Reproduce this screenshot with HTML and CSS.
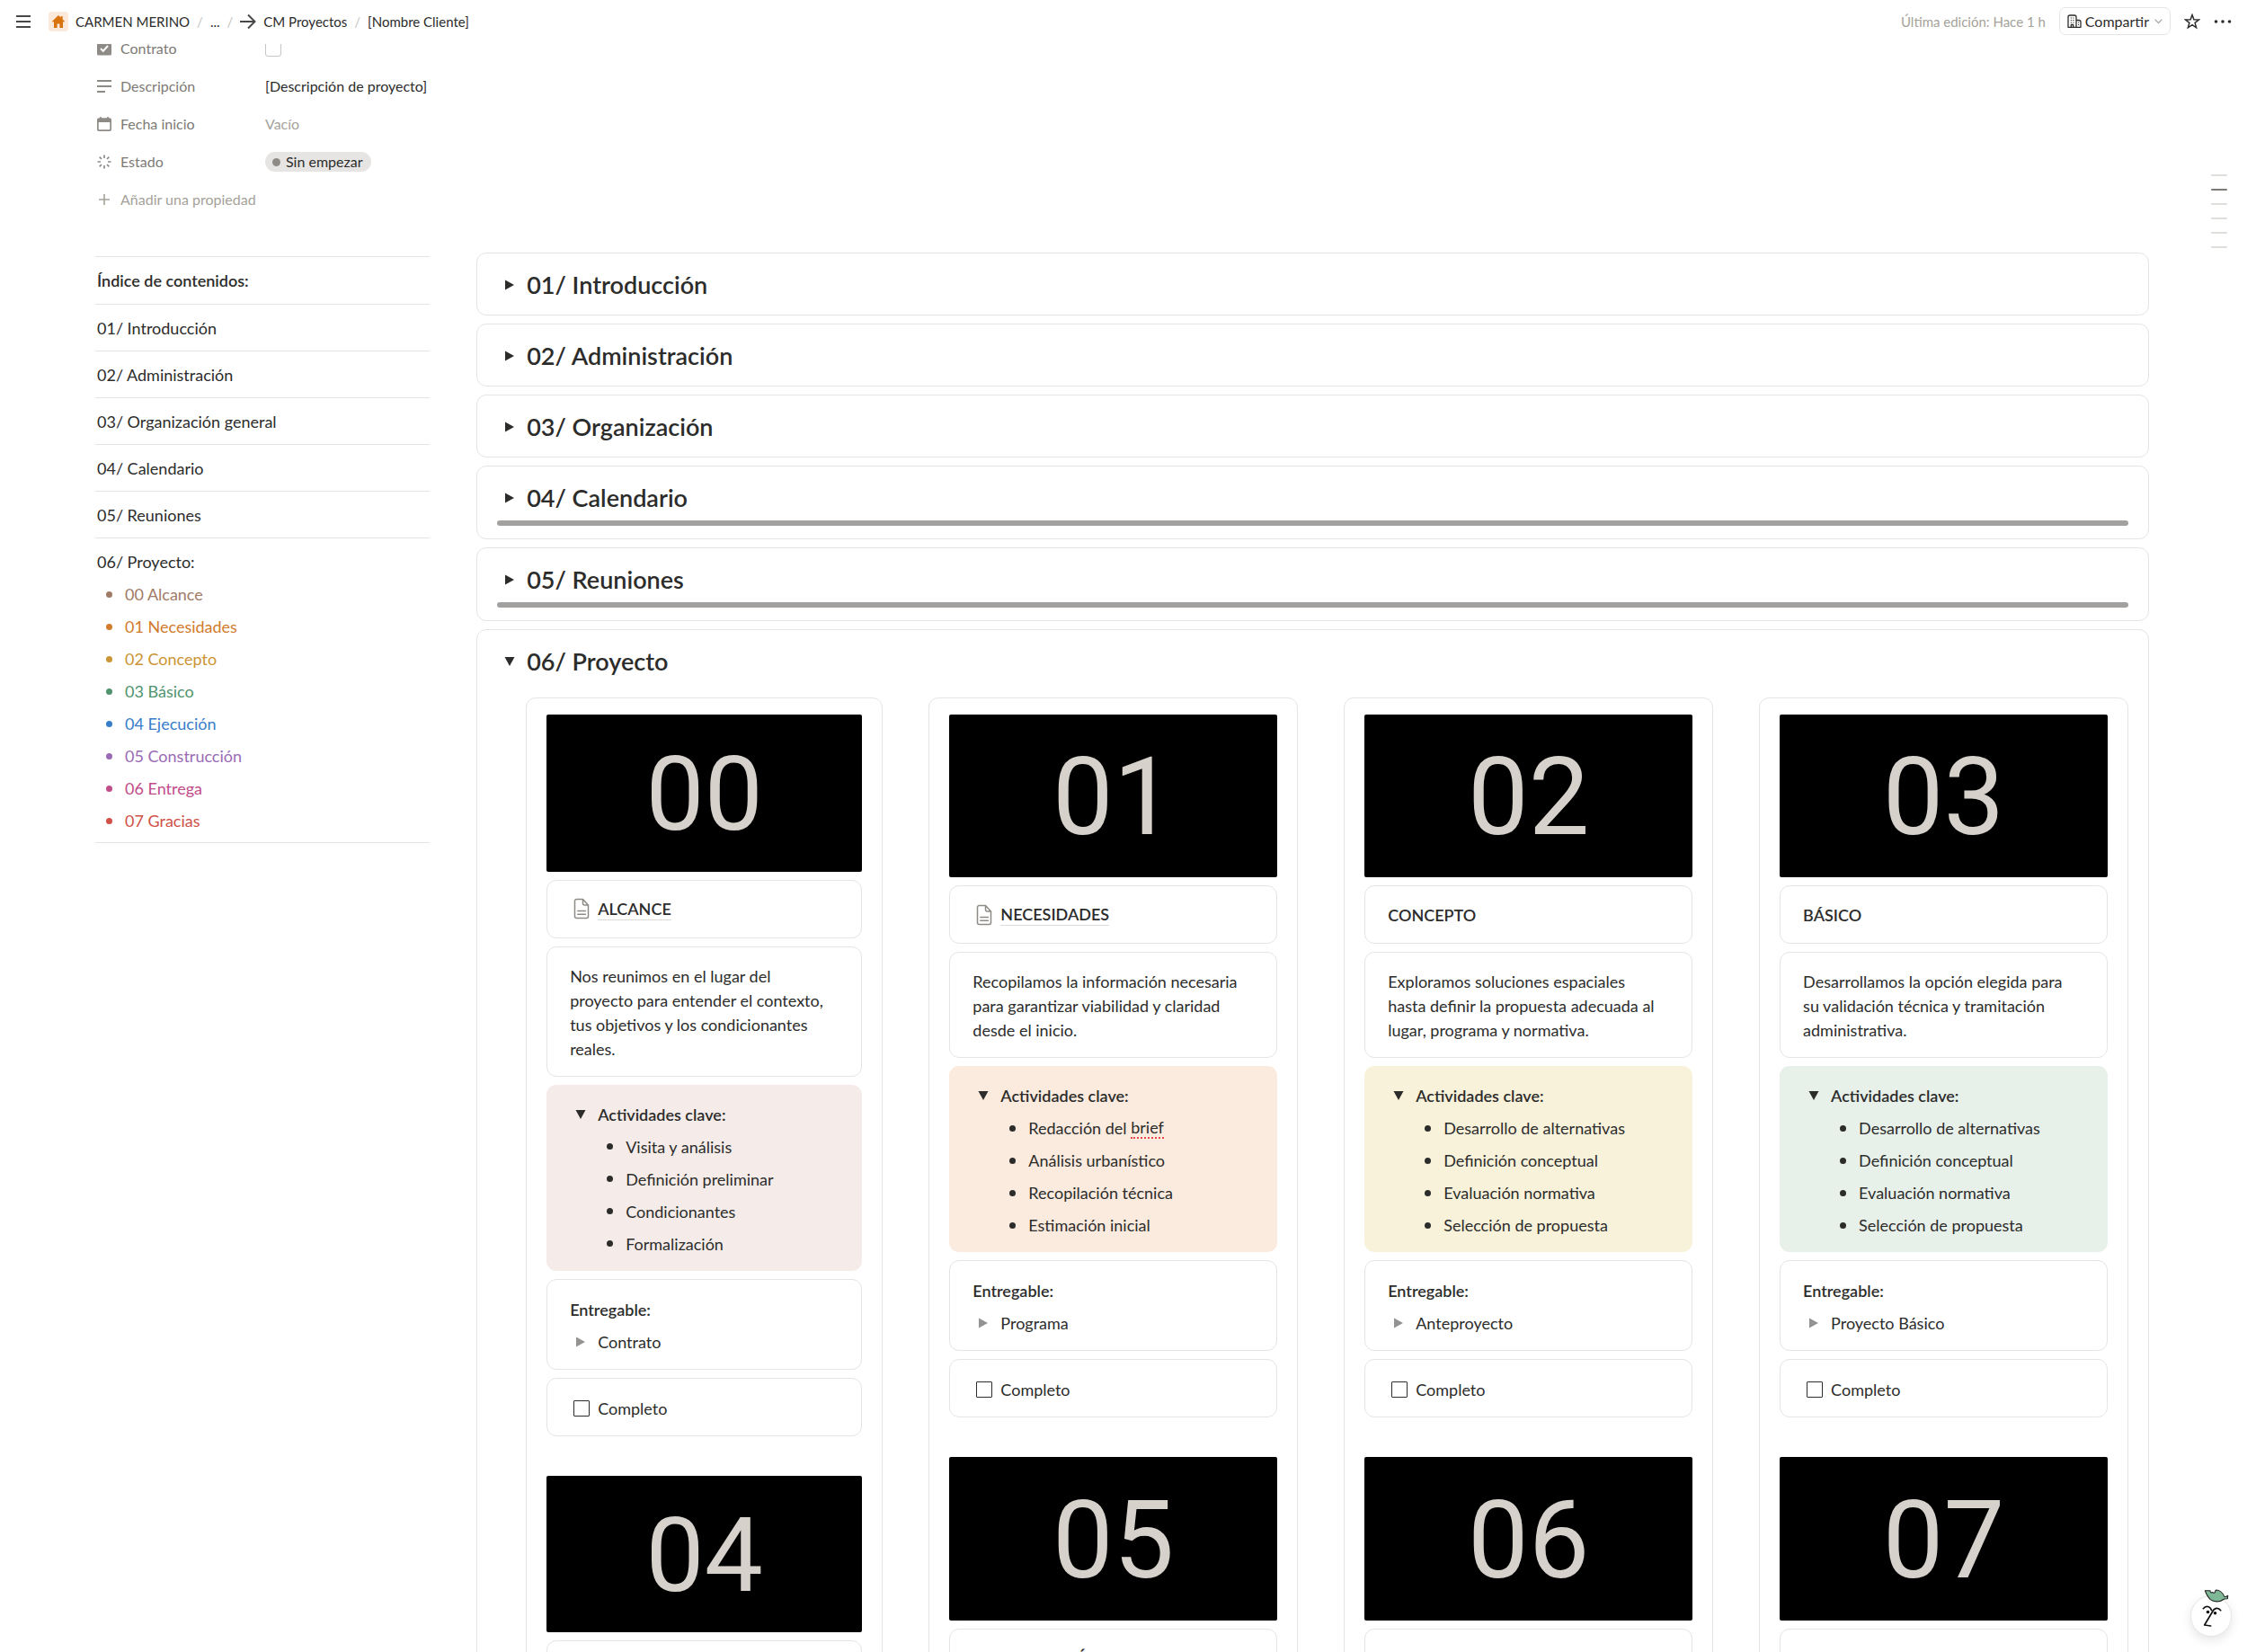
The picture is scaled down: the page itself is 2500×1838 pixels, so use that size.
FILE: index.html
```html
<!DOCTYPE html>
<html lang="es">
<head>
<meta charset="utf-8">
<meta name="viewport" content="width=device-width, initial-scale=1">
<title>[Nombre Cliente]</title>
<link rel="stylesheet" href="styles.css">
</head>
<body>
<svg class="sprite" aria-hidden="true">
  <symbol id="tri-right" viewBox="0 0 12 12"><path d="M1 .6v10.800L11 6z"/></symbol>
  <symbol id="tri-down" viewBox="0 0 12 12"><path d="M.500 1h11L6 11z"/></symbol>
  <symbol id="doc" viewBox="0 0 18 24"><path d="M3.500 1.500h7L16.500 8v12.500a2 2 0 0 1-2 2h-11a2 2 0 0 1-2-2v-17a2 2 0 0 1 2-2zM10.500 1.500V6a2 2 0 0 0 2 2h4M4.800 14.500h8.600M4.800 18.300h8.600" fill="none" stroke="#8e8b86" stroke-width="1.500" stroke-linecap="round" stroke-linejoin="round"/></symbol>
</svg>
<div class="app">
  <header class="topbar">
    <button class="icon-btn" aria-label="Menú"><svg width="18" height="16" viewBox="0 0 18 16"><path d="M1 2h16M1 8h16M1 14h16" stroke="#494846" stroke-width="2"/></svg></button>
    <nav class="crumbs" aria-label="Ruta">
      <a href="#" class="crumb"><span class="home"><svg width="14" height="14" viewBox="0 0 14 14"><path d="M7 0 0 6.800l.9.900L2 6.700V14h3.600V9.500h2.800V14H12V6.700l1.100 1 .9-.900-2.400-2.300V1H9.700v1.600z" fill="#d9730d"/></svg></span>CARMEN MERINO</a>
      <span class="slash">/</span>
      <a href="#" class="crumb">...</a>
      <span class="slash">/</span>
      <a href="#" class="crumb"><svg width="18" height="18" viewBox="0 0 18 18"><path d="M0 9h16.500M9 1.500l7.500 7.500L9 16.500" fill="none" stroke="#494846" stroke-width="2"/></svg>CM Proyectos</a>
      <span class="slash">/</span>
      <a href="#" class="crumb">[Nombre Cliente]</a>
    </nav>
    <div class="actions">
      <span class="edited">Última edición: Hace 1 h</span>
      <button class="share"><svg width="16" height="16" viewBox="0 0 16 16"><path d="M1 14.300V3a2 2 0 0 1 2-2h5a2 2 0 0 1 2 2v11.300zM10 6.500h3a2 2 0 0 1 2 2v5.800h-5M4.300 14v-2.500h2.400V14" fill="none" stroke="#2c2c2b" stroke-width="1.300" stroke-linejoin="round"/><path d="M3.800 4h1.200M6.300 4h1.200M3.800 6.500h1.200M6.300 6.500h1.200M3.800 9h1.200M6.300 9h1.200M12 9h1M12 11.500h1" stroke="#2c2c2b" stroke-width="1.200"/></svg>Compartir<svg class="chev" width="9" height="6" viewBox="0 0 9 6"><path d="M.7.7 4.500 4.700 8.300.7" fill="none" stroke="#a5a29a" stroke-width="1.200"/></svg></button>
      <button class="icon-btn" aria-label="Favorito"><svg width="18" height="18" viewBox="0 0 18 18"><path d="M9 1.600l1.900 5.200 5.600.2-4.400 3.400 1.500 5.400L9 12.700l-4.600 3.100 1.500-5.400L1.500 7l5.600-.2z" fill="none" stroke="#2c2c2b" stroke-width="1.500"/></svg></button>
      <button class="icon-btn" aria-label="Más"><svg width="20" height="4" viewBox="0 0 20 4"><g fill="#2c2c2b"><circle cx="2.500" cy="2" r="1.800"/><circle cx="10" cy="2" r="1.800"/><circle cx="17.500" cy="2" r="1.800"/></g></svg></button>
    </div>
  </header>

  <main class="page">
    <div class="props">
      <div class="prop">
        <label class="prop-name" for="contrato"><svg width="16" height="16" viewBox="0 0 16 16"><rect width="16" height="15" y=".5" rx="1.500" fill="#8e8b86"/><path d="M4 8l2.800 2.800L12 5" fill="none" stroke="#fff" stroke-width="2"/></svg>Contrato</label>
        <input class="prop-check" id="contrato" type="checkbox">
      </div>
      <div class="prop">
        <span class="prop-name"><svg width="16" height="16" viewBox="0 0 16 16"><path d="M0 2h16M0 8h16M0 14h9" stroke="#8e8b86" stroke-width="2"/></svg>Descripción</span>
        <span>[Descripción de proyecto]</span>
      </div>
      <div class="prop">
        <span class="prop-name"><svg width="16" height="16" viewBox="0 0 16 16"><path d="M2 1.200h1.200V0h1.600v1.200h6.400V0h1.600v1.200H14a2 2 0 0 1 2 2V14a2 2 0 0 1-2 2H2a2 2 0 0 1-2-2V3.200a2 2 0 0 1 2-2zM1.700 6v7.500c0 .5.300.8.800.8h11c.5 0 .8-.3.800-.8V6z" fill="#8e8b86" fill-rule="evenodd"/></svg>Fecha inicio</span>
        <span class="empty">Vacío</span>
      </div>
      <div class="prop">
        <span class="prop-name"><svg width="16" height="16" viewBox="0 0 16 16"><path d="M8 .5v3.500M8 12v3.500M.5 8H4M12 8h3.500M2.700 2.700l2.300 2.300M11 11l2.300 2.300M2.700 13.300 5 11M11 5l2.300-2.300" stroke="#8e8b86" stroke-width="1.700"/></svg>Estado</span>
        <span class="pill">Sin empezar</span>
      </div>
      <button class="prop-add"><svg width="16" height="16" viewBox="0 0 16 16"><path d="M8 2v12M2 8h12" stroke="#a5a29a" stroke-width="1.600"/></svg>Añadir una propiedad</button>
    </div>

    <div class="layout">
      <nav class="toc" aria-label="Índice">
        <h2 class="toc-title">Índice de contenidos:</h2>
        <a class="toc-item" href="#s1">01/ Introducción</a>
        <a class="toc-item" href="#s2">02/ Administración</a>
        <a class="toc-item" href="#s3">03/ Organización general</a>
        <a class="toc-item" href="#s4">04/ Calendario</a>
        <a class="toc-item" href="#s5">05/ Reuniones</a>
        <div class="toc-group">
          <a href="#s6">06/ Proyecto:</a>
          <ul class="bullets">
            <li class="t-brown"><a href="#f0">00 Alcance</a></li>
            <li class="t-orange"><a href="#f1">01 Necesidades</a></li>
            <li class="t-yellow"><a href="#f2">02 Concepto</a></li>
            <li class="t-green"><a href="#f3">03 Básico</a></li>
            <li class="t-blue"><a href="#f4">04 Ejecución</a></li>
            <li class="t-purple"><a href="#f5">05 Construcción</a></li>
            <li class="t-pink"><a href="#f6">06 Entrega</a></li>
            <li class="t-red"><a href="#f7">07 Gracias</a></li>
          </ul>
        </div>
      </nav>

      <div class="sections">
        <section class="box section" id="s1"><details><summary class="heading"><svg><use href="#tri-right"/></svg>01/ Introducción</summary></details></section>
        <section class="box section" id="s2"><details><summary class="heading"><svg><use href="#tri-right"/></svg>02/ Administración</summary></details></section>
        <section class="box section" id="s3"><details><summary class="heading"><svg><use href="#tri-right"/></svg>03/ Organización</summary></details></section>
        <section class="box section" id="s4"><details><summary class="heading"><svg><use href="#tri-right"/></svg>04/ Calendario</summary></details><div class="bar"></div></section>
        <section class="box section" id="s5"><details><summary class="heading"><svg><use href="#tri-right"/></svg>05/ Reuniones</summary></details><div class="bar"></div></section>
        <section class="box section" id="s6">
          <details open>
            <summary class="heading"><svg><use href="#tri-down"/></svg>06/ Proyecto</summary>
            <div class="phases">

              <div class="box column">
                <article class="phase" id="f0">
                  <div class="cover"><span>00</span></div>
                  <div class="box card title"><svg class="doc"><use href="#doc"/></svg><a class="page-link" href="#">ALCANCE</a></div>
                  <p class="box card text">Nos reunimos en el lugar del proyecto para entender el contexto, tus objetivos y los condicionantes reales.</p>
                  <details open class="card callout c-brown">
                    <summary class="toggle strong"><svg><use href="#tri-down"/></svg>Actividades clave:</summary>
                    <ul class="bullets nested"><li>Visita y análisis</li><li>Definición preliminar</li><li>Condicionantes</li><li>Formalización</li></ul>
                  </details>
                  <div class="box card">
                    <h3 class="strong">Entregable:</h3>
                    <details><summary class="toggle closed"><svg><use href="#tri-right"/></svg>Contrato</summary></details>
                  </div>
                  <div class="box card"><label class="todo"><input type="checkbox">Completo</label></div>
                </article>
                <article class="phase" id="f4">
                  <div class="cover"><span>04</span></div>
                  <div class="box card title">EJECUCIÓN</div>
                </article>
              </div>

              <div class="box column">
                <article class="phase" id="f1">
                  <div class="cover"><span>01</span></div>
                  <div class="box card title"><svg class="doc"><use href="#doc"/></svg><a class="page-link" href="#">NECESIDADES</a></div>
                  <p class="box card text">Recopilamos la información necesaria para garantizar viabilidad y claridad desde el inicio.</p>
                  <details open class="card callout c-orange">
                    <summary class="toggle strong"><svg><use href="#tri-down"/></svg>Actividades clave:</summary>
                    <ul class="bullets nested"><li>Redacción del <span class="misspelt">brief</span></li><li>Análisis urbanístico</li><li>Recopilación técnica</li><li>Estimación inicial</li></ul>
                  </details>
                  <div class="box card">
                    <h3 class="strong">Entregable:</h3>
                    <details><summary class="toggle closed"><svg><use href="#tri-right"/></svg>Programa</summary></details>
                  </div>
                  <div class="box card"><label class="todo"><input type="checkbox">Completo</label></div>
                </article>
                <article class="phase" id="f5">
                  <div class="cover"><span>05</span></div>
                  <div class="box card title">CONSTRUCCIÓN</div>
                </article>
              </div>

              <div class="box column">
                <article class="phase" id="f2">
                  <div class="cover"><span>02</span></div>
                  <div class="box card title">CONCEPTO</div>
                  <p class="box card text">Exploramos soluciones espaciales hasta definir la propuesta adecuada al lugar, programa y normativa.</p>
                  <details open class="card callout c-yellow">
                    <summary class="toggle strong"><svg><use href="#tri-down"/></svg>Actividades clave:</summary>
                    <ul class="bullets nested"><li>Desarrollo de alternativas</li><li>Definición conceptual</li><li>Evaluación normativa</li><li>Selección de propuesta</li></ul>
                  </details>
                  <div class="box card">
                    <h3 class="strong">Entregable:</h3>
                    <details><summary class="toggle closed"><svg><use href="#tri-right"/></svg>Anteproyecto</summary></details>
                  </div>
                  <div class="box card"><label class="todo"><input type="checkbox">Completo</label></div>
                </article>
                <article class="phase" id="f6">
                  <div class="cover"><span>06</span></div>
                  <div class="box card title">ENTREGA</div>
                </article>
              </div>

              <div class="box column">
                <article class="phase" id="f3">
                  <div class="cover"><span>03</span></div>
                  <div class="box card title">BÁSICO</div>
                  <p class="box card text">Desarrollamos la opción elegida para su validación técnica y tramitación administrativa.</p>
                  <details open class="card callout c-green">
                    <summary class="toggle strong"><svg><use href="#tri-down"/></svg>Actividades clave:</summary>
                    <ul class="bullets nested"><li>Desarrollo de alternativas</li><li>Definición conceptual</li><li>Evaluación normativa</li><li>Selección de propuesta</li></ul>
                  </details>
                  <div class="box card">
                    <h3 class="strong">Entregable:</h3>
                    <details><summary class="toggle closed"><svg><use href="#tri-right"/></svg>Proyecto Básico</summary></details>
                  </div>
                  <div class="box card"><label class="todo"><input type="checkbox">Completo</label></div>
                </article>
                <article class="phase" id="f7">
                  <div class="cover"><span>07</span></div>
                  <div class="box card title">USO</div>
                </article>
              </div>

            </div>
          </details>
        </section>
      </div>
    </div>
  </main>

  <div class="minimap" aria-hidden="true"><i></i><i class="on"></i><i></i><i></i><i></i><i></i></div>
  <button class="assistant" aria-label="Asistente">
    <svg width="46" height="46" viewBox="0 0 46 46">
      <path d="M16.300-5.300 22-5.200c0 2.200 1.500 2.400 3 1.800.300 1 2 1 2.600-.400.200-1 .100-1.800 1.100-2.200 3 .200 7.300 2.400 9 7.300l1.800.2 2.200-1.200-.400 3.400-3.600.3C33 7.800 26 7.600 22.300 4.600 19.500 2 17.800-1.500 16.300-5.300z" fill="#7fb896" stroke="#222" stroke-width="1.100" stroke-linejoin="round"/>
      <path d="M14.300 14.700c3-3.500 7.500-3 9.200 1.800M33.700 16.700c-2.500-3.500-7-3-9 1.300L15.700 33l7 1" fill="none" stroke="#111" stroke-width="1.700" stroke-linecap="round" stroke-linejoin="round"/>
      <circle cx="19.500" cy="18.500" r="1.800" fill="#111"/><circle cx="27.500" cy="19.700" r="1.800" fill="#111"/>
    </svg>
  </button>
</div>
</body>
</html>
```
FILE: styles.css
```css
:root {
  --text: #2c2c2b;
  --muted: #7d7a75;
  --faint: #a5a29a;
  --line: #e6e5e3;
}

* { box-sizing: border-box; }

body {
  margin: 0;
  color: var(--text);
  background: #fff;
  font: 18px/36px Lato, "Noto Sans", sans-serif;
}

a { color: inherit; text-decoration: none; }
button { font: inherit; color: inherit; background: none; border: 0; padding: 0; cursor: pointer; }
h2, h3, p, ul { margin: 0; padding: 0; font: inherit; list-style: none; }
svg { flex: none; }
summary { list-style: none; cursor: pointer; }
summary::-webkit-details-marker { display: none; }
.sprite { display: none; }

.app {
  display: flex;
  flex-direction: column;
  height: 100vh;
}

/* Top bar */
.topbar {
  flex: none;
  display: flex;
  align-items: center;
  justify-content: space-between;
  gap: 19px;
  height: 49px;
  padding: 0 17px 2px;
  font-size: 15px;
  line-height: 24px;
}
.icon-btn { display: flex; align-items: center; }
.crumbs { display: flex; align-items: center; gap: 8px; flex: 1; }
.crumb { display: flex; align-items: center; gap: 8px; }
.home {
  display: flex;
  align-items: center;
  justify-content: center;
  width: 22px;
  height: 22px;
  border-radius: 4px;
  background: #fbe9dc;
}
.slash { color: #c7c5c1; }
.actions { display: flex; align-items: center; gap: 15px; }
.edited { color: var(--faint); }
.share {
  display: flex;
  align-items: center;
  gap: 4px;
  height: 31px;
  padding: 0 8px;
  border: 1px solid var(--line);
  border-radius: 7px;
  font-size: 16px;
}
.chev { margin-left: 2px; }

/* Page */
.page {
  flex: 1;
  min-height: 0;
  overflow: auto;
  scrollbar-width: none;
  padding: 0 109px 0 106px;
}
.props { margin-top: -16px; padding-left: 2px; font-size: 16px; line-height: 24px; }
.prop { display: flex; align-items: center; height: 42px; }
.prop-name { display: flex; align-items: center; gap: 10px; width: 187px; color: var(--muted); }
.prop-check {
  appearance: none;
  width: 18px;
  height: 18px;
  margin: 0;
  border: 1px solid #c7c5c1;
  border-radius: 3px;
}
.prop-add { display: flex; align-items: center; gap: 10px; height: 42px; color: var(--faint); }
.empty { color: var(--faint); }
.pill {
  display: flex;
  align-items: center;
  gap: 6px;
  height: 22px;
  padding: 0 9px 0 8px;
  border-radius: 11px;
  background: #e6e5e3;
}
.pill::before { content: ""; width: 9px; height: 9px; border-radius: 50%; background: #8e8b86; }

.layout {
  display: grid;
  grid-template-columns: 1fr 5fr;
  gap: 52px;
  align-items: start;
  margin-top: 38px;
}

/* Index */
.toc { margin-top: 4px; border-top: 1px solid var(--line); }
.toc-title, .toc-item, .toc-group { display: block; padding: 8px 2px; border-bottom: 1px solid var(--line); }
.toc-item { padding-bottom: 7px; }
.toc-title { font-weight: 600; }
.toc-group { padding-bottom: 6px; }
.toc-group > a { display: block; }
.bullets li { display: flex; align-items: center; white-space: pre; }
.bullets li::before {
  content: "";
  flex: none;
  width: 7px;
  height: 7px;
  margin: 0 14px 0 10px;
  border-radius: 50%;
  background: currentColor;
}
.t-brown { color: #9f7a66; }
.t-orange { color: #d27b2d; }
.t-yellow { color: #cb9434; }
.t-green { color: #50946e; }
.t-blue { color: #387dc9; }
.t-purple { color: #9a6bb4; }
.t-pink { color: #c14c8a; }
.t-red { color: #cf5148; }

/* Sections */
.box { border: 1px solid var(--line); border-radius: 11px; }
.sections { display: grid; gap: 9px; min-width: 0; }
.section { padding: 16px 22px 14px; }
.heading {
  display: flex;
  align-items: center;
  gap: 13px;
  padding-left: 8px;
  font-size: 27px;
  line-height: 38px;
  font-weight: 600;
}
.heading svg { width: 12px; height: 12px; fill: var(--text); }
.bar { height: 6px; margin-top: 6px; border-radius: 3px; background: #a2a1a0; }

.phases {
  display: grid;
  grid-template-columns: 29fr 30fr 30fr 30fr;
  gap: 51px;
  margin: 21px 0 0 32px;
}
.column { display: grid; align-content: start; gap: 44px; padding: 18px 22px; min-width: 0; }
.phase { display: grid; gap: 9px; }
.cover {
  container-type: inline-size;
  display: flex;
  align-items: center;
  justify-content: center;
  aspect-ratio: 350 / 174;
  padding-top: 4px;
  border-radius: 2px;
  background: #000;
}
.cover span { color: #d6d1cb; font: 33cqw/1 Roboto, "Liberation Sans", sans-serif; }

.card { padding: 15px 25px 12px; }
.title { display: flex; align-items: center; min-height: 65px; padding: 13px 25px; font-weight: 600; }
.doc { width: 18px; height: 24px; margin: 0 9px 0 4px; }
.page-link { line-height: 24px; border-bottom: 1px solid #dcdad7; }
.text { padding: 19px 34px 16px 25px; line-height: 27px; }
.strong { font-weight: 600; }
.toggle { display: flex; align-items: center; }
.toggle svg { width: 12px; height: 12px; margin: 0 13px 0 6px; fill: var(--text); }
.closed svg { fill: #949391; }
.callout { padding: 15px 26px 12px; border-radius: 11px; }
.nested { margin-left: 31px; }
.c-brown { background: #f5ece9; }
.c-orange { background: #fbeade; }
.c-yellow { background: #f9f2db; }
.c-green { background: #e8f0ea; }
.misspelt { line-height: 22px; border-bottom: 2px dotted #e5484d; }
.todo { display: flex; align-items: center; }
.todo input {
  appearance: none;
  width: 18px;
  height: 18px;
  margin: 0 9px 0 4px;
  border: 1px solid var(--text);
  border-radius: 1px;
}

/* Floating controls */
.minimap { position: fixed; top: 194px; right: 22px; display: grid; gap: 14px; }
.minimap i { width: 18px; height: 2px; border-radius: 1px; background: #dfdedb; }
.minimap .on { background: #7d7a75; }
.assistant {
  position: fixed;
  right: 17px;
  bottom: 17px;
  display: flex;
  justify-content: center;
  align-items: center;
  width: 46px;
  height: 46px;
  border: 1px solid var(--line);
  border-radius: 50%;
  background: #fff;
  box-shadow: 0 4px 12px rgba(0, 0, 0, .1);
}
.assistant svg { overflow: visible; }
```
